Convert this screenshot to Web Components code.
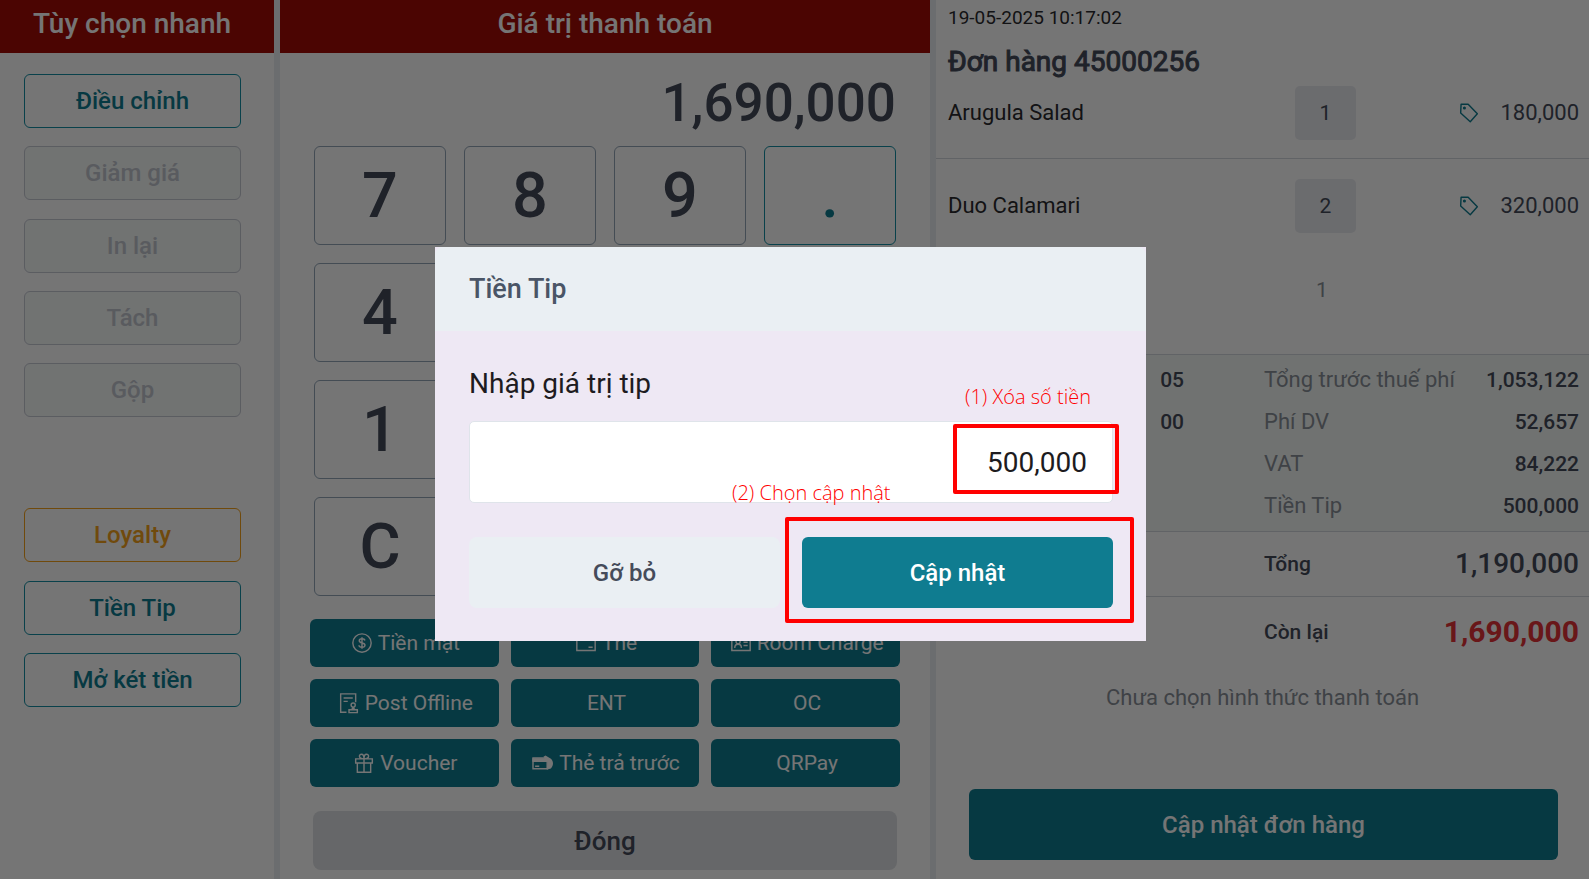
<!DOCTYPE html>
<html lang="vi">
<head>
<meta charset="utf-8">
<meta name="viewport" content="width=device-width, initial-scale=1">
<title>Thanh toán</title>
<style>
  :root {
    --teal: #0f7c90;
    --teal-line: #148ea3;
    --ink: #454b5a;
    --muted: #8a9099;
    --line: #d3d8de;
    --panel: #eaeff3;
  }

  body {
    margin: 0;
    font-family: Roboto, "Noto Sans", sans-serif;
    color: var(--ink);
    background: #fff;
  }
</style>
</head>
<body>
<pos-app></pos-app>

<script>
const ICONS = {
  cash: `<circle cx="12" cy="12" r="11"/><path d="M15.500 9c-.3-1.400-1.600-2.200-3.500-2.200S8.700 7.700 8.700 9.300c0 3.600 6.900 1.700 6.900 5.200 0 1.700-1.500 2.700-3.600 2.700s-3.500-.9-3.700-2.500M12 5v14"/>`,
  card: `<path d="M1 4h22v17H1zM1 8h22M15 17h5"/>`,
  room: `<path d="M1 4h22v17H1zM4.500 18c0-3 1.500-4.500 4-4.500s4 1.500 4 4.500M15 11h5M15 15h5"/><circle cx="8.500" cy="10.500" r="2.500"/>`,
  offline: `<path d="M9 23H2V1h18v10M5.500 6h11M5.500 10h5M12 20h10v3.500H12zM15.500 20l1-3M18.500 20l-1-3"/><circle cx="17" cy="14.500" r="2.500"/>`,
  gift: `<path d="M2 7h20v5H2zM4 12v11h16V12M12 7v16M12 7C8 7 6.500 5.500 6.500 4S7.600 1.500 9 1.500 12 3.500 12 7zM12 7c4 0 5.500-1.500 5.500-3S16.400 1.500 15 1.500 12 3.500 12 7z"/>`,
  prepaid: `<path d="M0 6h17v13H0zM0 10h17M2.500 16h5"/><path d="M0 7h17v2.500H0z" fill="currentColor"/><path fill="currentColor" stroke="none" d="M12.500 4.500 15 3l6.500 4c3.300 3 3.300 8 0 11.500L16.500 20l1-9z"/>`,
  tag: `<path d="M2.500 1.500h8.500L22 13 13.500 22.500 2 12z" stroke-linejoin="round"/><circle cx="6.500" cy="6" r="1" fill="currentColor"/>`
};

class PosIcon extends HTMLElement {
  constructor() {
    super();
    this.attachShadow({ mode: "open" });
  }

  connectedCallback() {
    this.shadowRoot.innerHTML = `
      <style>
        :host { display: block; flex: none; width: 20px; height: 20px; }
        svg { display: block; width: 100%; height: 100%; overflow: visible; }
      </style>
      <svg viewBox="0 0 24 24" fill="none" stroke="currentColor" stroke-width="1.700" aria-hidden="true">${ICONS[this.getAttribute("name")]}</svg>
    `;
  }
}

class PosButton extends HTMLElement {
  constructor() {
    super();
    this.attachShadow({ mode: "open" });
  }

  connectedCallback() {
    const icon = this.getAttribute("icon");
    this.shadowRoot.innerHTML = `
      <style>
        :host { display: block; height: 54px; }
        button {
          box-sizing: border-box;
          width: 100%;
          height: 100%;
          display: flex;
          align-items: center;
          justify-content: center;
          gap: 6px;
          padding: 0;
          border: 1px solid var(--teal-line);
          border-radius: 6px;
          background: none;
          color: var(--teal);
          font: 500 24px/28px Roboto, "Noto Sans", sans-serif;
          white-space: nowrap;
          cursor: pointer;
        }
        button:disabled { border-color: #c6cad4; background: #f6faf9; color: #c3c6cf; cursor: default; }
        :host([kind="loyalty"]) button { border-color: #f5a11c; color: #f5a11c; }
        :host([kind="solid"]) { height: 71px; }
        :host([kind="solid"]) button { border: 0; background: var(--teal); color: #fff; }
        :host([kind="soft"]) { height: 71px; }
        :host([kind="soft"]) button { border: 0; border-radius: 8px; background: var(--panel); color: var(--ink); }
        :host([kind="pay"]) { height: 48px; }
        :host([kind="pay"]) button { border: 0; padding-left: 3px; background: var(--teal); color: #fff; font-size: 21px; font-weight: 400; }
        :host([kind="close"]) { height: 59px; }
        :host([kind="close"]) button { border: 0; border-radius: 8px; background: #dfe1e4; color: var(--ink); font-size: 26px; }
        :host([kind="key"]), :host([kind="dot"]) { height: 99px; }
        :host([kind="key"]) button, :host([kind="dot"]) button { font-size: 63px; line-height: 72px; }
        :host([kind="key"]) button { border-color: #94a6b8; color: var(--ink); }
      </style>
      <button type="button" ${this.hasAttribute("disabled") ? "disabled" : ""}>
        ${icon ? `<pos-icon name="${icon}"></pos-icon>` : ""}
        <slot></slot>
      </button>
    `;
  }
}

class PosHeader extends HTMLElement {
  constructor() {
    super();
    this.attachShadow({ mode: "open" }).innerHTML = `
      <style>
        :host { display: block; height: 53px; background: #a30b06; color: #fff; }
        h2 { margin: 0; font-size: 28px; font-weight: 500; line-height: 48px; text-align: center; }
      </style>
      <h2><slot></slot></h2>
    `;
  }
}

class QuickOptions extends HTMLElement {
  constructor() {
    super();
    this.attachShadow({ mode: "open" }).innerHTML = `
      <style>
        :host { display: block; }
        pos-header { padding-right: 10px; }
        nav {
          display: grid;
          grid-template-rows: repeat(9, 54px);
          align-content: space-between;
          height: 72vh;
          padding: 21px 33px 0 24px;
        }
        .loyalty { grid-row: 7; }
        .tip { grid-row: 8; }
        .drawer { grid-row: 9; }
      </style>
      <pos-header>Tùy chọn nhanh</pos-header>
      <nav>
        <pos-button>Điều chỉnh</pos-button>
        <pos-button disabled>Giảm giá</pos-button>
        <pos-button disabled>In lại</pos-button>
        <pos-button disabled>Tách</pos-button>
        <pos-button disabled>Gộp</pos-button>
        <pos-button class="loyalty" kind="loyalty">Loyalty</pos-button>
        <pos-button class="tip">Tiền Tip</pos-button>
        <pos-button class="drawer">Mở két tiền</pos-button>
      </nav>
    `;
  }
}

class PaymentPad extends HTMLElement {
  constructor() {
    super();
    this.attachShadow({ mode: "open" }).innerHTML = `
      <style>
        :host { display: block; }
        .pad { padding: 19px 34px 0; }
        output { display: block; margin-bottom: 12px; font-size: 53px; font-weight: 500; line-height: 62px; text-align: right; }
        .keys { display: grid; grid-template-columns: repeat(4, 1fr); gap: 18px; }
        .first { grid-column: 1; }
        .methods { display: grid; grid-template-columns: repeat(3, 1fr); gap: 12px; padding: 23px 30px 24px; }
        .close { padding: 0 33px; }
      </style>
      <pos-header>Giá trị thanh toán</pos-header>
      <div class="pad">
        <output>1,690,000</output>
        <div class="keys">
          <pos-button kind="key">7</pos-button>
          <pos-button kind="key">8</pos-button>
          <pos-button kind="key">9</pos-button>
          <pos-button kind="dot">.</pos-button>
          <pos-button class="first" kind="key">4</pos-button>
          <pos-button class="first" kind="key">1</pos-button>
          <pos-button class="first" kind="key">C</pos-button>
        </div>
      </div>
      <div class="methods">
        <pos-button kind="pay" icon="cash">Tiền mặt</pos-button>
        <pos-button kind="pay" icon="card">Thẻ</pos-button>
        <pos-button kind="pay" icon="room">Room Charge</pos-button>
        <pos-button kind="pay" icon="offline">Post Offline</pos-button>
        <pos-button kind="pay">ENT</pos-button>
        <pos-button kind="pay">OC</pos-button>
        <pos-button kind="pay" icon="gift">Voucher</pos-button>
        <pos-button kind="pay" icon="prepaid">Thẻ trả trước</pos-button>
        <pos-button kind="pay">QRPay</pos-button>
      </div>
      <div class="close"><pos-button kind="close">Đóng</pos-button></div>
    `;
  }
}

class OrderSummary extends HTMLElement {
  constructor() {
    super();
    this.attachShadow({ mode: "open" });
    this.items = [
      { name: "Arugula Salad", qty: 1, price: "180,000" },
      { name: "Duo Calamari", qty: 2, price: "320,000" }
    ];
    this.totals = [
      { side: "05", label: "Tổng trước thuế phí", value: "1,053,122" },
      { side: "00", label: "Phí DV", value: "52,657" },
      { side: "", label: "VAT", value: "84,222" },
      { side: "", label: "Tiền Tip", value: "500,000" }
    ];
  }

  connectedCallback() {
    this.shadowRoot.innerHTML = `
      <style>
        :host { display: flex; flex-direction: column; font-size: 22px; line-height: 24px; }
        time { padding: 8px 12px 0; font-size: 19px; line-height: 20px; color: #2b2b2e; }
        h1 { margin: 0; padding: 18px 12px 0; font-size: 28px; font-weight: 400; line-height: 32px; -webkit-text-stroke: 1px; }
        table { width: 100%; border-collapse: collapse; table-layout: fixed; }
        td { box-sizing: border-box; padding: 0; white-space: nowrap; }
        .items td:first-child { width: 359px; padding-left: 12px; color: #2b2b2e; }
        .items td:nth-child(2) { width: 61px; }
        .items tr { height: 95px; }
        .items tr:first-child { height: 80px; }
        .items tr:first-child td { padding-bottom: 9px; border-bottom: 1px solid var(--line); }
        .qty { display: block; border-radius: 5px; background: #eaebf0; font-size: 21px; line-height: 54px; text-align: center; }
        .price { display: flex; align-items: center; justify-content: flex-end; gap: 21px; padding-right: 10px; }
        pos-icon { color: var(--teal); }
        .sub { box-sizing: border-box; height: 101px; padding: 25px 0 0 380px; font-size: 21px; color: var(--muted); }
        .totals { padding: 4px 0; border: solid var(--line); border-width: 1px 0; background: #f4f8f6; }
        .totals td { height: 42px; }
        .totals .side { width: 248px; text-align: right; font-size: 21px; font-weight: 500; }
        .totals .label { width: 290px; padding-left: 80px; color: var(--muted); }
        .totals .value { padding-right: 10px; text-align: right; font-size: 21px; font-weight: 500; }
        .sum { display: flex; align-items: center; justify-content: space-between; height: 64px; padding: 0 10px 0 328px; font-size: 21px; font-weight: 500; }
        .sum + .sum { height: 70px; border-top: 1px solid var(--line); }
        .sum b { font-size: 28px; font-weight: 500; }
        .sum .due { font-size: 30px; font-weight: 700; color: #e53238; }
        .none { margin: 0; padding-top: 19px; text-align: center; color: var(--muted); }
        .save { margin: auto 31px 19px 33px; }
      </style>
      <time datetime="2025-05-19T10:17:02">19-05-2025 10:17:02</time>
      <h1>Đơn hàng 45000256</h1>
      <table class="items">
        ${this.items.map(i => `
          <tr>
            <td>${i.name}</td>
            <td><span class="qty">${i.qty}</span></td>
            <td><span class="price"><pos-icon name="tag"></pos-icon>${i.price}</span></td>
          </tr>`).join("")}
      </table>
      <div class="sub">1</div>
      <div class="totals">
        <table>
          ${this.totals.map(t => `
            <tr>
              <td class="side">${t.side}</td>
              <td class="label">${t.label}</td>
              <td class="value">${t.value}</td>
            </tr>`).join("")}
        </table>
      </div>
      <div class="sum"><span>Tổng</span><b>1,190,000</b></div>
      <div class="sum"><span>Còn lại</span><b class="due">1,690,000</b></div>
      <p class="none">Chưa chọn hình thức thanh toán</p>
      <pos-button class="save" kind="solid">Cập nhật đơn hàng</pos-button>
    `;
  }
}

class TipDialog extends HTMLElement {
  constructor() {
    super();
    this.attachShadow({ mode: "open" }).innerHTML = `
      <style>
        :host {
          position: fixed;
          inset: 0;
          box-sizing: border-box;
          display: flex;
          align-items: center;
          justify-content: center;
          padding: 9px 8px 0 0;
          background: rgba(0, 0, 0, 0.54);
        }
        section { position: relative; width: 711px; max-width: 100%; background: #eee8f4; }
        h2 { margin: 0; padding: 26px 34px; border-radius: 8px 8px 0 0; background: var(--panel); font-size: 27px; font-weight: 500; line-height: 32px; color: #4a5566; }
        form { padding: 37px 33px 33px 34px; }
        label { display: block; margin-bottom: 21px; font-size: 28px; line-height: 32px; color: #1d1b20; }
        input {
          box-sizing: border-box;
          display: block;
          width: 100%;
          height: 82px;
          padding: 0 25px;
          border: 1px solid #dfe4ea;
          border-radius: 5px;
          background: #fff;
          font: 28px/32px Roboto, "Noto Sans", sans-serif;
          color: #1d1b20;
          text-align: right;
        }
        .actions { display: grid; grid-template-columns: 1fr 1fr; gap: 22px; margin-top: 34px; }
        .mark { position: absolute; box-sizing: border-box; border: 4px solid #f00; border-radius: 2px; pointer-events: none; }
        .amount { left: 518px; top: 177px; width: 166px; height: 70px; }
        .update { left: 350px; top: 270px; width: 349px; height: 106px; }
        .note { position: absolute; font: 300 20px/28px "Open Sans", "Noto Sans", sans-serif; color: #f00; white-space: nowrap; pointer-events: none; }
        .one { left: 530px; top: 136px; }
        .two { left: 297px; top: 232px; }
      </style>
      <section role="dialog" aria-labelledby="title">
        <h2 id="title">Tiền Tip</h2>
        <form>
          <label for="tip">Nhập giá trị tip</label>
          <input id="tip" inputmode="numeric" value="500,000">
          <div class="actions">
            <pos-button kind="soft">Gỡ bỏ</pos-button>
            <pos-button kind="solid">Cập nhật</pos-button>
          </div>
        </form>
        <span class="mark amount"></span>
        <span class="mark update"></span>
        <span class="note one">(1) Xóa số tiền</span>
        <span class="note two">(2) Chọn cập nhật</span>
      </section>
    `;
  }
}

class PosApp extends HTMLElement {
  constructor() {
    super();
    this.attachShadow({ mode: "open" }).innerHTML = `
      <style>
        :host {
          display: grid;
          grid-template-columns: 274fr 650fr 653fr;
          gap: 6px;
          min-height: 100vh;
          background: #e9edf1;
        }
        quick-options, payment-pad, order-summary { background: #fff; min-width: 0; }
      </style>
      <quick-options></quick-options>
      <payment-pad></payment-pad>
      <order-summary></order-summary>
      <tip-dialog></tip-dialog>
    `;
  }
}

customElements.define("pos-icon", PosIcon);
customElements.define("pos-button", PosButton);
customElements.define("pos-header", PosHeader);
customElements.define("quick-options", QuickOptions);
customElements.define("payment-pad", PaymentPad);
customElements.define("order-summary", OrderSummary);
customElements.define("tip-dialog", TipDialog);
customElements.define("pos-app", PosApp);
</script>
</body>
</html>
